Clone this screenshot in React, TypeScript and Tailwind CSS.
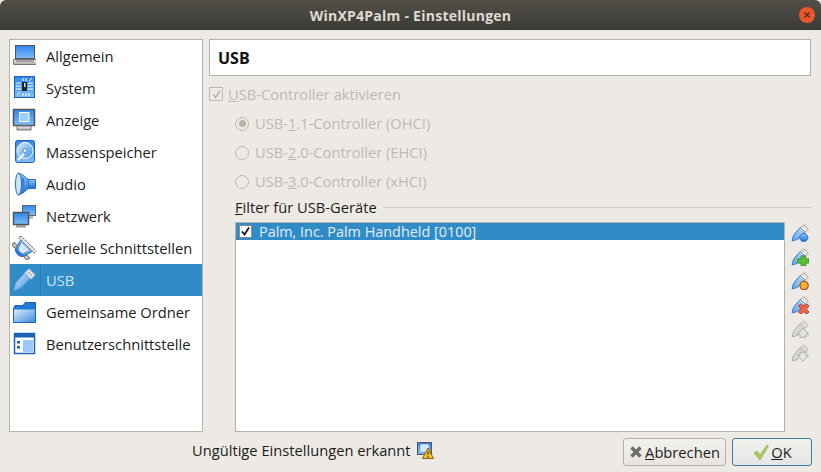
import type { ReactNode } from "react";

const FONT = "font-['Open_Sans','Noto_Sans',sans-serif]";

function Ico({ children, size = 24 }: { children: ReactNode; size?: number }) {
  return (
    <svg width={size} height={size} viewBox="0 0 24 24" className="shrink-0">
      {children}
    </svg>
  );
}

function Gradients() {
  return (
    <svg width="0" height="0" className="absolute">
      <defs>
        <linearGradient id="blue" x1="0" y1="0" x2="0" y2="1">
          <stop offset="0" stopColor="#8cc4f6" />
          <stop offset="1" stopColor="#1f6fd8" />
        </linearGradient>
        <linearGradient id="blue2" x1="0" y1="0" x2="1" y2="1">
          <stop offset="0" stopColor="#dcecfb" />
          <stop offset="1" stopColor="#3d8fe0" />
        </linearGradient>
        <linearGradient id="plug" x1="1" y1="0" x2="0" y2="1">
          <stop offset="0" stopColor="#bfe0fa" />
          <stop offset="1" stopColor="#5aa5ea" />
        </linearGradient>
        <linearGradient id="screen" x1="0" y1="0" x2="0" y2="1">
          <stop offset="0" stopColor="#2f86ee" />
          <stop offset="1" stopColor="#7fbdf8" />
        </linearGradient>
        <linearGradient id="gray" x1="0" y1="0" x2="0" y2="1">
          <stop offset="0" stopColor="#f2f2f2" />
          <stop offset="1" stopColor="#a9a9a9" />
        </linearGradient>
      </defs>
    </svg>
  );
}

const LaptopIcon = () => (
  <Ico>
    <rect x="3.500" y="1.500" width="19" height="13" fill="url(#screen)" stroke="#555" />
    <path d="M1.500 15.500h23v5h-23z" fill="url(#gray)" stroke="#777" />
    <path d="M4 17h18" stroke="#666" />
  </Ico>
);

const SystemIcon = () => (
  <Ico>
    <rect x="2.500" y="0.500" width="20" height="21" fill="url(#screen)" stroke="#1c62b8" />
    <rect x="10" y="6" width="5" height="9" fill="#222" />
    <rect x="12" y="7" width="1.500" height="4" fill="#ddd" />
    <path
      d="M4 7h5M4 10h5M4 13h5M16 7h5M16 10h5M16 13h5M11 2v3M14 2v3M11 17v3M14 17v3M17 20v-3M5 19l3-3M17 5l3-3"
      stroke="#fff"
      strokeWidth="1"
    />
  </Ico>
);

const MonitorIcon = () => (
  <Ico>
    <rect x="1.500" y="1.500" width="21" height="16" fill="url(#screen)" stroke="#555" strokeWidth="1.500" />
    <rect x="7.500" y="4.500" width="9.500" height="9" fill="#9fd0fb" stroke="#fff" />
    <path d="M5 18h14v4H5z" fill="url(#gray)" stroke="#777" />
  </Ico>
);

const DiskIcon = () => (
  <Ico>
    <rect x="3.500" y="0.500" width="19" height="22" rx="2" fill="url(#screen)" stroke="#1c62b8" />
    <circle cx="13" cy="10.500" r="8" fill="url(#blue2)" stroke="#fff" />
    <circle cx="13" cy="10.500" r="2" fill="#fff" stroke="#3d8fe0" />
    <path d="M6 20l6-6" stroke="#fff" strokeWidth="2" />
  </Ico>
);

const AudioIcon = () => (
  <Ico>
    <path d="M16 7.500h7.500v9H16z" fill="url(#blue)" stroke="#2a6fc0" />
    <path d="M6 1c5 1 8 5 10.500 6.500v9C14 18 11 22 6 23z" fill="url(#blue)" stroke="#2a6fc0" />
    <ellipse cx="6.500" cy="12" rx="3" ry="11" fill="#cfe6fb" stroke="#2a6fc0" />
    <path d="M11 6v12" stroke="#3a85dc" strokeWidth="2" />
  </Ico>
);

const NetworkIcon = () => (
  <Ico>
    <rect x="10.500" y="1.500" width="13" height="10" fill="url(#screen)" stroke="#666" />
    <path d="M13 12h8v3h-8z" fill="#bbb" />
    <rect x="1.500" y="8.500" width="15" height="12" fill="url(#screen)" stroke="#555" strokeWidth="1.500" />
    <path d="M4 21h10v2.500H4z" fill="#999" />
  </Ico>
);

const SerialIcon = () => (
  <Ico>
    <g transform="rotate(45 12 12)">
      <path d="M4 8h16l-2 9c-1 3-3 4-6 4s-5-1-6-4z" fill="url(#blue)" stroke="#2a6fc0" />
      <path d="M7 10h10l-1.500 6c-1 2-6 2-7 0z" fill="#d4e8fb" />
      <path d="M1 5.500h22v3H1z" fill="#e8e8e8" stroke="#777" strokeDasharray="2 1" />
      <path d="M1 15h5v3.500H1zM18 15h5v3.500h-5z" fill="#c9c9c9" stroke="#777" />
    </g>
  </Ico>
);

const UsbPlug = ({ body = "url(#plug)", edge = "#2a6fc0", head = "#f6f6f6", headEdge = "#8a8a8a" }: {
  body?: string;
  edge?: string;
  head?: string;
  headEdge?: string;
}) => (
  <>
    <path d="M12.500 4.500l6 6-8 8.500c-2 2-6 3-9 3.500 0.500-3.500 1.500-7 3.500-9.500z" fill={body} stroke={edge} strokeWidth="1.200" />
    <path d="M13 5l4-4 6 6-4 4z" fill={head} stroke={headEdge} strokeWidth="1.200" />
    <path d="M16.500 4.500l1 1M19.500 7.500l-1-1" stroke="#666" strokeWidth="1.200" />
  </>
);

const UsbIcon = () => (
  <Ico>
    <UsbPlug body="url(#blue2)" edge="#4d91cf" head="#e8f1f8" headEdge="#a9c6dc" />
  </Ico>
);

const FolderIcon = () => (
  <Ico>
    <path d="M1.500 8.500L3 5.500h8l2-3h10.500v20h-22z" fill="#1f78d8" stroke="#1c62b8" />
    <path d="M2 9.500h21v12.500H2z" fill="url(#blue2)" />
  </Ico>
);

const WindowIcon = () => (
  <Ico>
    <rect x="2.500" y="1.500" width="20" height="20" fill="#fff" stroke="#1c62b8" strokeWidth="1.500" />
    <rect x="3" y="2" width="19" height="3.500" fill="#1c62b8" />
    <rect x="11" y="8" width="10" height="12" fill="#9cc8f5" />
    <path d="M5 9h3v2.500H5zM5 14h3v2.500H5z" fill="#1c62b8" />
  </Ico>
);

const UsbRefresh = () => (
  <Ico size={18}>
    <UsbPlug />
    <circle cx="17" cy="18" r="5.500" fill="url(#blue)" stroke="#2a6fc0" strokeWidth="1.200" />
  </Ico>
);
const UsbAdd = () => (
  <Ico size={18}>
    <UsbPlug />
    <path d="M13.500 10.500h6v4H24v5.500h-4.500v4h-6v-4H9v-5.500h4.500z" fill="#5ac13c" stroke="#2f8a1c" strokeWidth="1.200" />
  </Ico>
);
const UsbEdit = () => (
  <Ico size={18}>
    <UsbPlug />
    <circle cx="17.500" cy="18" r="5.500" fill="#f7b733" stroke="#b4521c" strokeWidth="1.800" />
  </Ico>
);
const UsbRemove = () => (
  <Ico size={18}>
    <UsbPlug />
    <path d="M10 13l3-2.500 4 3.500 4-3.500 3 2.500-3.500 4.500 3.500 4-3 2.500-4-3-4 3-3-2.500 3.500-4z" fill="#f0664a" stroke="#b32d1a" strokeWidth="1.200" />
  </Ico>
);
const UsbUp = () => (
  <Ico size={18}>
    <UsbPlug body="#d6d6d6" edge="#a5a5a5" head="#ececec" headEdge="#a5a5a5" />
    <path d="M16 11l7.500 8H20v4h-8v-4H8.500z" fill="#e4e4e4" stroke="#a5a5a5" strokeWidth="1.200" />
  </Ico>
);
const UsbDown = () => (
  <Ico size={18}>
    <UsbPlug body="#d6d6d6" edge="#a5a5a5" head="#ececec" headEdge="#a5a5a5" />
    <path d="M12 11h8v4h3.500L16 23l-7.500-8H12z" fill="#e4e4e4" stroke="#a5a5a5" strokeWidth="1.200" />
  </Ico>
);

const NAV = [
  { label: "Allgemein", Icon: LaptopIcon },
  { label: "System", Icon: SystemIcon },
  { label: "Anzeige", Icon: MonitorIcon },
  { label: "Massenspeicher", Icon: DiskIcon },
  { label: "Audio", Icon: AudioIcon },
  { label: "Netzwerk", Icon: NetworkIcon },
  { label: "Serielle Schnittstellen", Icon: SerialIcon },
  { label: "USB", Icon: UsbIcon, active: true },
  { label: "Gemeinsame Ordner", Icon: FolderIcon },
  { label: "Benutzerschnittstelle", Icon: WindowIcon },
];

function Radio({ checked, label, mnemonic, rest }: { checked?: boolean; label: string; mnemonic: string; rest: string }) {
  return (
    <div className="flex h-[29px] items-center pl-[26px] text-[#bdb9b3]">
      <span className="flex h-[14px] w-[14px] items-center justify-center rounded-full border border-[#bdb9b3] bg-[#edeae5]">
        {checked && <span className="h-[7px] w-[7px] rounded-full bg-[#b5b1ab]" />}
      </span>
      <span className="ml-[6px]">
        {label}
        <u>{mnemonic}</u>
        {rest}
      </span>
    </div>
  );
}

export default function App() {
  return (
    <div className={`flex h-[472px] w-[821px] flex-col overflow-hidden bg-[#edeae5] text-[14.7px] text-[#2f2f2f] ${FONT}`}>
      <Gradients />
      <header className="relative flex h-[30px] shrink-0 items-center justify-center rounded-t-[6px] bg-gradient-to-b from-[#524f47] to-[#3c3b37]">
        <span className="text-[14px] font-bold tracking-[0.25px] text-[#dfdbd2]">WinXP4Palm - Einstellungen</span>
        <span className="absolute right-[6px] top-[7px] flex h-[16px] w-[16px] items-center justify-center rounded-full bg-[#e9562a]">
          <svg width="8" height="8" viewBox="0 0 8 8">
            <path d="M1.500 1.500l5 5M6.500 1.500l-5 5" stroke="#4a2a1c" strokeWidth="1.200" />
          </svg>
        </span>
      </header>

      <div className="flex h-[402px] shrink-0 pl-[9px] pt-[9px]">
        <nav className="h-[393px] w-[194px] border border-[#b5b0a9] bg-white">
          {NAV.map(({ label, Icon, active }) => (
            <div
              key={label}
              className={`flex h-[32px] items-center pl-[2px] ${active ? "bg-[#308cc6] text-[#cfe3f1]" : "text-[#1c1c1c]"}`}
            >
              <Icon />
              {active && <span className="ml-[4px] h-full w-[1px] bg-[#2a7fb5]" />}
              <span className={`whitespace-nowrap ${active ? "ml-[5px]" : "ml-[10px]"}`}>{label}</span>
            </div>
          ))}
        </nav>

        <main className="ml-[6px] flex w-[602px] flex-col">
          <div className="flex h-[37px] shrink-0 items-center border border-[#b5b0a9] bg-white pl-[8px] text-[16px] font-bold text-[#111]">
            USB
          </div>
          <div className="mt-[8px] flex h-[20px] items-center text-[#bdb9b3]">
            <span className="flex h-[14px] w-[14px] items-center justify-center border border-[#bdb9b3]">
              <svg width="11" height="11" viewBox="0 0 11 11">
                <path d="M2 5.500l2.500 3L9 2" stroke="#b5b1ab" strokeWidth="1.500" fill="none" />
              </svg>
            </span>
            <span className="ml-[5px]">
              <u>U</u>SB-Controller aktivieren
            </span>
          </div>
          <div className="mt-[5px]">
            <Radio checked label="USB-" mnemonic="1" rest=".1-Controller (OHCI)" />
            <Radio label="USB-" mnemonic="2" rest=".0-Controller (EHCI)" />
            <Radio label="USB-" mnemonic="3" rest=".0-Controller (xHCI)" />
          </div>
          <div className="mt-[1px] flex h-[20px] items-center pl-[26px]">
            <span className="text-[#1c1c1c]">
              <u>F</u>ilter für USB-Geräte
            </span>
            <span className="ml-[6px] h-[1px] flex-1 bg-[#cfcbc5]" />
          </div>
          <div className="mt-[5px] flex pl-[26px]">
            <div className="h-[210px] w-[550px] border border-[#b5b0a9] bg-white">
              <div className="flex h-[17px] items-center bg-[#308cc6] pl-[3px] text-[#e3eff7]">
                <span className="flex h-[13px] w-[13px] items-center justify-center border border-[#8a8a8a] bg-white">
                  <svg width="11" height="11" viewBox="0 0 11 11">
                    <path d="M2 5.500l2.500 3L9 1.500" stroke="#111" strokeWidth="1.800" fill="none" />
                  </svg>
                </span>
                <span className="ml-[7px] whitespace-nowrap text-[14.4px]">Palm, Inc. Palm Handheld [0100]</span>
              </div>
            </div>
            <div className="ml-[6px] flex flex-col gap-[6px] pt-[2px]">
              <UsbRefresh />
              <UsbAdd />
              <UsbEdit />
              <UsbRemove />
              <UsbUp />
              <UsbDown />
            </div>
          </div>
        </main>
      </div>

      <footer className="flex h-[40px] shrink-0 items-center pl-[192px]">
        <span className="mb-[4px] whitespace-nowrap text-[#1c1c1c]">Ungültige Einstellungen erkannt</span>
        <svg width="17" height="17" viewBox="0 0 17 17" className="mb-[4px] ml-[6px]">
          <rect x="0.500" y="0.500" width="14" height="12" fill="url(#screen)" stroke="#555" />
          <rect x="4" y="3" width="7" height="6" fill="#cfe6fb" stroke="#fff" />
          <path d="M11 6l5.500 10.500H5.500z" fill="#f7c52e" stroke="#8a5a10" />
          <path d="M11 9.500v3.500M11 14v1.500" stroke="#222" />
        </svg>
        <button className="ml-auto flex h-[28px] w-[103px] items-center justify-center rounded-[3px] border border-[#b5b0a9] bg-gradient-to-b from-[#f3f1ee] to-[#e8e5e0] text-[#1c1c1c]">
          <svg width="14" height="14" viewBox="0 0 14 14" className="mr-[2px]">
            <path d="M2.500 2.500l9 9M11.500 2.500l-9 9" stroke="#6f6f6f" strokeWidth="3.500" />
          </svg>
          <span>
            <u>A</u>bbrechen
          </span>
        </button>
        <button className="ml-[6px] mr-[9px] flex h-[28px] w-[80px] items-center justify-center rounded-[3px] border border-[#3b7ea8] bg-gradient-to-b from-[#f3f1ee] to-[#e3e4e3] text-[#1c1c1c]">
          <svg width="18" height="18" viewBox="0 0 18 18" className="mr-[1px]">
            <path d="M2 10l3-2 3 4 7-10 1.500 1L8 17z" fill="#a7cf52" stroke="#93a75e" strokeWidth="0.700" />
          </svg>
          <span>
            <u>O</u>K
          </span>
        </button>
      </footer>
    </div>
  );
}
